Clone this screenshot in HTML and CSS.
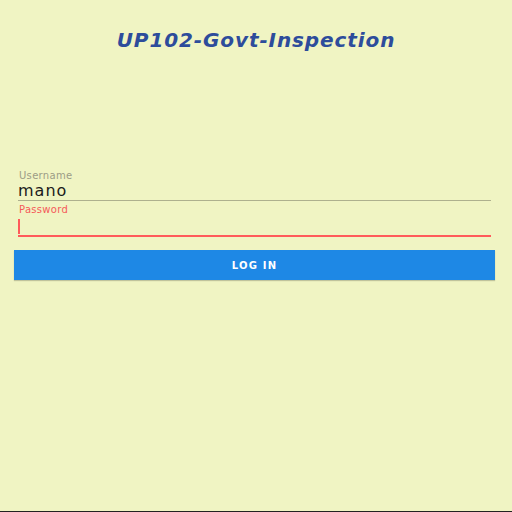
FILE: index.html
```html
<!DOCTYPE html>
<html lang="en">

<head>
    <meta charset="UTF-8">
    <meta name="viewport" content="width=device-width, initial-scale=1.0">
    <title>UP102-Govt-Inspection</title>
    <link rel="stylesheet" href="styles.css">
</head>

<body>
    <div class="screen">
        <h1 class="title">UP102-Govt-Inspection</h1>

        <form class="login">
            <div class="field">
                <label class="field-label">Username</label>
                <div class="field-input">mano</div>
            </div>
            <div class="field field-active">
                <label class="field-label">Password</label>
                <div class="field-input"><span class="cursor"></span></div>
            </div>
            <button type="button" class="btn-login">LOG IN</button>
        </form>
    </div>
</body>

</html>
```

FILE: styles.css
```css
* {
    margin: 0;
    padding: 0;
    box-sizing: border-box;
}

body {
    background: #f0f4c3;
    font-family: "DejaVu Sans", "Liberation Sans", sans-serif;
}

.screen {
    height: 512px;
    border-bottom: 1px solid #222;
    display: flex;
    flex-direction: column;
}

.title {
    margin-top: 30px;
    text-align: center;
    font-size: 20px;
    font-weight: 700;
    font-style: italic;
    color: #2d4c9b;
    letter-spacing: 0.9px;
    line-height: 20px;
}

.login {
    margin-top: 120px;
    padding: 0 17px 0 14px;
    display: flex;
    flex-direction: column;
}

.field {
    margin-left: 4px;
    margin-right: 4px;
    display: flex;
    flex-direction: column;
}

.field-label {
    font-size: 10px;
    line-height: 12px;
    color: #9c9c86;
    padding-left: 1px;
    letter-spacing: 0.3px;
}

.field-input {
    height: 19px;
    font-size: 16px;
    line-height: 18px;
    color: #1b1b1b;
    border-bottom: 1px solid #aeb08e;
    letter-spacing: 1px;
}

.field-active {
    margin-top: 3px;
}

.field-active .field-label {
    color: #f55a5a;
}

.field-active .field-input {
    height: 21px;
    border-bottom: 2px solid #ff5a5a;
    padding-top: 3px;
}

.cursor {
    display: block;
    width: 2px;
    height: 15px;
    background: #ff5a5a;
}

.btn-login {
    margin-top: 13px;
    height: 30px;
    border: none;
    background: #1e88e5;
    color: #fff;
    font-family: "DejaVu Sans", sans-serif;
    font-size: 10px;
    font-weight: 700;
    letter-spacing: 1.2px;
    box-shadow: 0 1px 1px rgba(0, 0, 0, 0.2);
}
```
